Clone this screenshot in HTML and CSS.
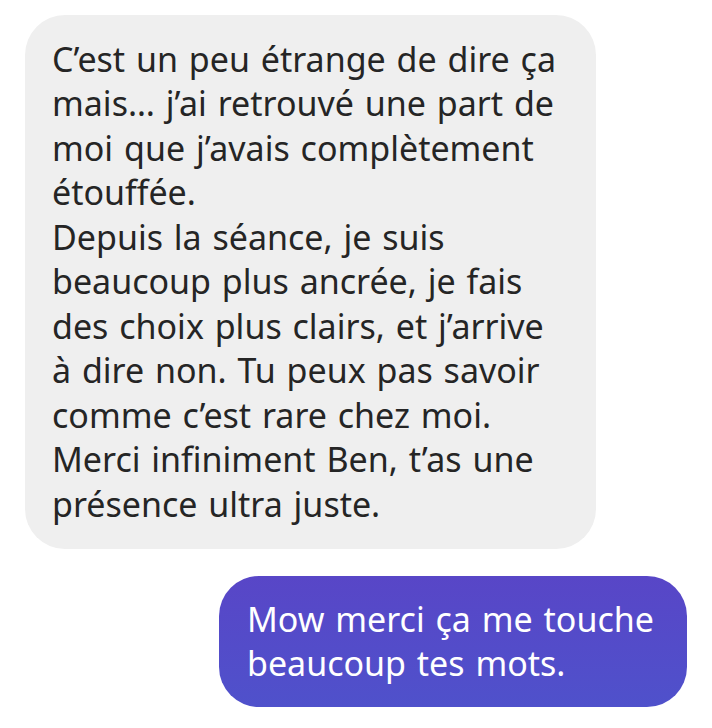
FILE: index.html
```html
<!DOCTYPE html>
<html lang="fr">
<head>
<meta charset="utf-8">
<link rel="stylesheet" href="styles.css">
</head>
<body>
<div class="chat">
  <div class="msg msg-in">C’est un peu étrange de dire ça<br>mais… j’ai retrouvé une part de<br>moi que j’avais complètement<br>étouffée.<br>Depuis la séance, je suis<br>beaucoup plus ancrée, je fais<br>des choix plus clairs, et j’arrive<br>à dire non. Tu peux pas savoir<br>comme c’est rare chez moi.<br>Merci infiniment Ben, t’as une<br>présence ultra juste.</div>
  <div class="msg msg-out">Mow merci ça me touche<br>beaucoup tes mots.</div>
</div>
</body>
</html>
```
FILE: styles.css
```css
html, body {
  margin: 0;
  padding: 0;
  background: #ffffff;
}
.chat {
  width: 712px;
  height: 728px;
  box-sizing: border-box;
  padding: 15px 25px 0 25px;
  display: flex;
  flex-direction: column;
  gap: 27px;
  font-family: "Noto Sans", "Open Sans", sans-serif;
  font-size: 34px;
  line-height: 44.45px;
  word-spacing: 2px;
}
.msg {
  box-sizing: border-box;
  border-radius: 40px;
  white-space: nowrap;
}
.msg-in {
  align-self: flex-start;
  width: 571px;
  padding: 22px 20px 23px 27px;
  background: #efefef;
  color: #252525;
}
.msg-out {
  align-self: flex-end;
  width: 468px;
  padding: 21px 20px 21px 28px;
  background: linear-gradient(180deg, #5846c7 0%, #4f51cb 100%);
  color: #ffffff;
}
```
